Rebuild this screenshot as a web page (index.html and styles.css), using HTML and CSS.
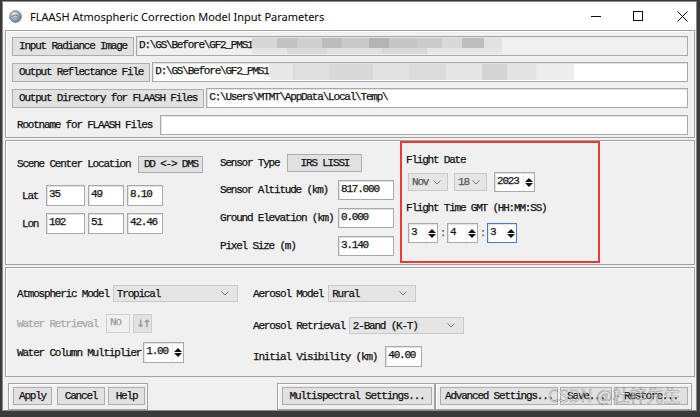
FILE: index.html
```html
<!DOCTYPE html>
<html>
<head>
<meta charset="utf-8">
<link rel="stylesheet" href="styles.css">
</head>
<body>
<div class="window">
  <div class="titlebar">
    <svg class="app-icon" width="13" height="13" viewBox="0 0 13 13">
      <defs>
        <radialGradient id="g" cx="40%" cy="35%" r="70%">
          <stop offset="0" stop-color="#eef2f6"/>
          <stop offset="0.6" stop-color="#9aa8b6"/>
          <stop offset="1" stop-color="#5d6b7a"/>
        </radialGradient>
      </defs>
      <circle cx="6.5" cy="6.5" r="5.8" fill="url(#g)" stroke="#5a6570" stroke-width="0.8"/>
      <path d="M2.5 6.5 Q6.5 3.5 10.5 6.5" fill="none" stroke="#4a6a8a" stroke-width="0.9"/>
      <path d="M3 8.5 Q6.5 6 10 8.5" fill="none" stroke="#6a8aa8" stroke-width="0.7"/>
    </svg>
    <span class="title">FLAASH Atmospheric Correction Model Input Parameters</span>
    <div class="controls">
      <svg class="ctl ctl-min" width="11" height="11" viewBox="0 0 11 11"><path d="M0 5.5 H10" stroke="#111" stroke-width="1"/></svg>
      <svg class="ctl ctl-max" width="11" height="11" viewBox="0 0 11 11"><rect x="0.5" y="0.5" width="9" height="9" fill="none" stroke="#111" stroke-width="1"/></svg>
      <svg class="ctl ctl-close" width="11" height="11" viewBox="0 0 11 11"><path d="M0.5 0.5 L10.5 10.5 M10.5 0.5 L0.5 10.5" stroke="#111" stroke-width="1"/></svg>
    </div>
  </div>

  <div class="client">
    <section class="panel files">
      <div class="file-row">
        <button class="btn">Input Radiance Image</button>
        <div class="field field-ro"><span>D:\GS\Before\GF2_PMS1</span><span class="mosaic mosaic-a"></span></div>
      </div>
      <div class="file-row">
        <button class="btn">Output Reflectance File</button>
        <div class="field"><span>D:\GS\Before\GF2_PMS1</span><span class="mosaic mosaic-b"></span></div>
      </div>
      <div class="file-row">
        <button class="btn">Output Directory for FLAASH Files</button>
        <div class="field"><span>C:\Users\MTMT\AppData\Local\Temp\</span></div>
      </div>
      <div class="file-row">
        <span class="root-label">Rootname for FLAASH Files</span>
        <div class="field"></div>
      </div>
    </section>

    <section class="panel scene">
      <div class="col-loc">
        <div class="line">
          <span>Scene Center Location</span>
          <button class="btn btn-dd">DD &lt;-&gt; DMS</button>
        </div>
        <div class="coords">
          <span class="coord-label">Lat</span>
          <div class="field num">35</div>
          <div class="field num">49</div>
          <div class="field num">8.10</div>
          <span class="coord-label">Lon</span>
          <div class="field num">102</div>
          <div class="field num">51</div>
          <div class="field num">42.46</div>
        </div>
      </div>

      <div class="col-sensor">
        <div class="line">
          <span>Sensor Type</span>
          <button class="btn btn-sensor">IRS LISSI</button>
        </div>
        <div class="sensor-grid">
          <span>Sensor Altitude (km)</span>
          <div class="field num">817.000</div>
          <span>Ground Elevation (km)</span>
          <div class="field num">0.000</div>
          <span>Pixel Size (m)</span>
          <div class="field num">3.140</div>
        </div>
      </div>

      <div class="col-flight">
        <div class="flight-label">Flight Date</div>
        <div class="date-row">
          <div class="combo combo-month"><span>Nov</span><svg class="chev" width="8" height="5" viewBox="0 0 8 5"><path d="M0.5 0.5 L4 4 L7.5 0.5" fill="none" stroke="#777" stroke-width="1"/></svg></div>
          <div class="combo combo-day"><span>18</span><svg class="chev" width="8" height="5" viewBox="0 0 8 5"><path d="M0.5 0.5 L4 4 L7.5 0.5" fill="none" stroke="#777" stroke-width="1"/></svg></div>
          <div class="spin spin-year"><span class="val">2023</span><span class="arrows"><i class="up"></i><i class="dn"></i></span></div>
        </div>
        <div class="flight-label time-label">Flight Time GMT (HH:MM:SS)</div>
        <div class="time-row">
          <div class="spin spin-t"><span class="val">3</span><span class="arrows"><i class="up"></i><i class="dn"></i></span></div>
          <span class="colon">:</span>
          <div class="spin spin-t spin-m"><span class="val">4</span><span class="arrows"><i class="up"></i><i class="dn"></i></span></div>
          <span class="colon">:</span>
          <div class="spin spin-t focus"><span class="val">3</span><span class="arrows"><i class="up"></i><i class="dn"></i></span></div>
        </div>
      </div>
    </section>

    <section class="panel atmos">
      <div class="col-atm">
        <div class="line row-a">
          <span>Atmospheric Model</span>
          <div class="combo combo-atm"><span>Tropical</span><svg class="chev" width="8" height="5" viewBox="0 0 8 5"><path d="M0.5 0.5 L4 4 L7.5 0.5" fill="none" stroke="#777" stroke-width="1"/></svg></div>
        </div>
        <div class="line row-b disabled">
          <span>Water Retrieval</span>
          <div class="no-box">No</div>
          <button class="btn btn-swap">&#8595;&#8593;</button>
        </div>
        <div class="line row-c">
          <span>Water Column Multiplier</span>
          <div class="spin spin-wcm"><span class="val">1.00</span><span class="arrows"><i class="up"></i><i class="dn"></i></span></div>
        </div>
      </div>
      <div class="col-aer">
        <div class="line row-a">
          <span>Aerosol Model</span>
          <div class="combo combo-aer"><span>Rural</span><svg class="chev" width="8" height="5" viewBox="0 0 8 5"><path d="M0.5 0.5 L4 4 L7.5 0.5" fill="none" stroke="#777" stroke-width="1"/></svg></div>
        </div>
        <div class="line row-d">
          <span>Aerosol Retrieval</span>
          <div class="combo combo-ret"><span>2-Band (K-T)</span><svg class="chev" width="8" height="5" viewBox="0 0 8 5"><path d="M0.5 0.5 L4 4 L7.5 0.5" fill="none" stroke="#777" stroke-width="1"/></svg></div>
        </div>
        <div class="line row-e">
          <span>Initial Visibility (km)</span>
          <div class="field num vis">40.00</div>
        </div>
      </div>
    </section>

    <div class="actions">
      <div class="group g-main">
        <button class="btn b-apply">Apply</button>
        <button class="btn b-cancel">Cancel</button>
        <button class="btn b-help">Help</button>
      </div>
      <div class="group g-multi">
        <button class="btn b-multi">Multispectral Settings...</button>
      </div>
      <div class="group g-adv">
        <button class="btn b-adv">Advanced Settings...</button>
        <button class="btn b-save">Save...</button>
        <button class="btn b-restore">Restore...</button>
      </div>
    </div>
  </div>

  <div class="watermark">CSDN @杜梓先生</div>
</div>
</body>
</html>
```

FILE: styles.css
```css
* { box-sizing: border-box; }

html, body {
  margin: 0;
  padding: 0;
}

body {
  width: 700px;
  height: 417px;
  overflow: hidden;
  background: #3a3a3a;
  font-family: "Liberation Mono", "DejaVu Sans Mono", monospace;
  font-size: 11px;
  letter-spacing: -1.2px;
  color: #111;
  -webkit-text-stroke: 0.25px currentColor;
}

.window {
  position: relative;
  margin: 1px 0 0 2px;
  width: 695px;
  height: 410px;
  background: #f0f0f0;
  border: 1px solid #8a8a8a;
  display: flex;
  flex-direction: column;
}

/* ---------- title bar ---------- */
.titlebar {
  height: 28px;
  flex: none;
  background: #ffffff;
  display: flex;
  align-items: center;
  padding-left: 6px;
  font-family: "Noto Sans", "Open Sans", sans-serif;
  font-size: 11px;
  letter-spacing: 0;
  color: #000;
  -webkit-text-stroke: 0;
}

.app-icon { flex: none; }

.title { margin-left: 8px; }

.controls {
  margin-left: auto;
  display: flex;
  align-items: center;
  padding-right: 8px;
}

.ctl { display: block; }
.ctl-max { margin-left: 31px; }
.ctl-close { margin-left: 33px; }

/* ---------- client ---------- */
.client {
  flex: 1;
  display: flex;
  flex-direction: column;
  padding: 0 1px 0 2px;
}

.panel {
  border: 1px solid #a2a2a2;
  box-shadow: inset 1px 1px 0 #ffffff;
}

.btn {
  font: inherit;
  letter-spacing: inherit;
  color: #111;
  background: #e1e1e1;
  border: 1px solid #adadad;
  padding: 0 6px;
  margin: 0;
  height: 19px;
  white-space: nowrap;
  display: flex;
  align-items: center;
  justify-content: center;
}

.field {
  background: #ffffff;
  border: 1px solid #a9a9a9;
  box-shadow: inset 1px 1px 0 #e2e2e2;
  display: flex;
  align-items: flex-start;
  padding: 2px 0 0 2px;
  white-space: nowrap;
  overflow: hidden;
  line-height: 13px;
}

.field-ro { background: #f0f0f0; }

/* ---------- files panel ---------- */
.files {
  height: 108px;
  padding: 5px 6px 0 6px;
  display: flex;
  flex-direction: column;
  gap: 6px;
}

.file-row {
  display: flex;
  align-items: center;
  gap: 2px;
  height: 20px;
}

.file-row .field {
  flex: 1;
  height: 20px;
}

.file-row:nth-child(4) { margin-top: 1px; }

.root-label {
  width: 146px;
  padding-left: 5px;
  flex: none;
}

.mosaic {
  display: block;
  height: 16px;
  margin-top: -1px;
  flex: none;
}

.mosaic-a {
  width: 250px;
  background:
    linear-gradient(90deg, #d6d6d6 0 10%, #c2c2c2 10% 18%, #cfcfcf 18% 28%, #bcbcbc 28% 36%, #c9c9c9 36% 47%, #b4b4b4 47% 55%, #c6c6c6 55% 66%, #cbcbcb 66% 76%, #d9d9d9 76% 84%, #bebebe 84% 93%, #e2e2e2 93% 100%) top / 100% 10px no-repeat,
    linear-gradient(90deg, #e4e4e4 0 14%, #dadada 14% 30%, #e0e0e0 30% 52%, #d8d8d8 52% 70%, #e6e6e6 70% 100%) bottom / 100% 6px no-repeat;
}

.mosaic-b {
  width: 305px;
  background:
    linear-gradient(90deg, #e8e8e8 0 8%, #dedede 8% 20%, #d9d9d9 20% 34%, #e2e2e2 34% 46%, #dcdcdc 46% 58%, #e6e6e6 58% 70%, #d4d4d4 70% 78%, #e3e3e3 78% 88%, #ededed 88% 100%);
}

/* ---------- scene panel ---------- */
.scene {
  margin-top: 2px;
  height: 125px;
  display: flex;
  align-items: flex-start;
}

.line {
  display: flex;
  align-items: center;
  white-space: nowrap;
}

.col-loc {
  width: 214px;
  flex: none;
  padding: 14px 0 0 11px;
}

.col-loc .line { height: 18px; }

.btn-dd {
  margin-left: 8px;
  width: 65px;
  height: 17px;
  padding: 0;
}

.coords {
  margin-top: 12px;
  display: grid;
  grid-template-columns: 29px 36px 36px 36px;
  grid-auto-rows: 21px;
  column-gap: 3px;
  row-gap: 7px;
  align-items: center;
}

.coords .coord-label { padding-left: 5px; }
.coords .field { height: 21px; }
.coords .coord-label + .field { margin-left: -3px; }

.col-sensor {
  width: 180px;
  flex: none;
  padding-top: 13px;
}

.col-sensor .line { height: 18px; }

.btn-sensor {
  margin-left: 8px;
  width: 75px;
  height: 18px;
}

.sensor-grid {
  margin-top: 8px;
  display: grid;
  grid-template-columns: 118px 56px;
  grid-auto-rows: 20px;
  row-gap: 8px;
  align-items: center;
}

.sensor-grid .field { height: 20px; }

.col-flight {
  width: 200px;
  height: 122px;
  flex: none;
  border: 2px solid #ee3a32;
  padding: 11px 0 0 4px;
}

.flight-label {
  line-height: 12px;
  height: 12px;
}

.date-row {
  margin-top: 6px;
  display: flex;
  align-items: center;
  height: 20px;
  padding-left: 2px;
}

.combo {
  height: 18px;
  background: #e5e5e5;
  border: 1px solid #c9c9c9;
  display: flex;
  align-items: center;
  justify-content: space-between;
  padding: 0 6px 0 3px;
  white-space: nowrap;
}

.combo .chev { flex: none; }

.combo-month { width: 40px; color: #555; }
.combo-day { width: 33px; margin-left: 6px; color: #555; }

.spin {
  height: 20px;
  background: #ffffff;
  border: 1px solid #a9a9a9;
  box-shadow: inset 1px 1px 0 #e2e2e2;
  display: flex;
}

.spin .val {
  flex: 1;
  padding: 2px 0 0 2px;
  line-height: 13px;
  overflow: hidden;
}

.spin .arrows {
  width: 11px;
  flex: none;
  display: flex;
  flex-direction: column;
  align-items: center;
  justify-content: center;
  gap: 1px;
  border-left: 1px solid #ececec;
}

.spin .up {
  width: 0;
  height: 0;
  border-left: 4px solid transparent;
  border-right: 4px solid transparent;
  border-bottom: 4px solid #111;
}

.spin .dn {
  width: 0;
  height: 0;
  border-left: 4px solid transparent;
  border-right: 4px solid transparent;
  border-top: 4px solid #111;
}

.spin-year { width: 41px; margin-left: 7px; }

.time-label { margin-top: 10px; }

.time-row {
  margin-top: 9px;
  display: flex;
  align-items: center;
  padding-left: 2px;
}

.spin-t { width: 30px; }
.spin-m { width: 31px; }
.spin.focus { border-color: #3c7fd1; }

.colon {
  width: 9px;
  text-align: center;
  color: #666;
}

/* ---------- atmosphere panel ---------- */
.atmos {
  margin-top: 2px;
  height: 110px;
  display: flex;
  align-items: flex-start;
}

.col-atm {
  width: 247px;
  flex: none;
  padding: 17px 0 0 11px;
}

.col-aer {
  flex: 1;
  padding-top: 17px;
}

.row-a { height: 17px; }
.row-b { height: 19px; margin-top: 12px; }
.row-c { height: 21px; margin-top: 9px; }
.row-d { height: 17px; margin-top: 15px; }
.row-e { height: 21px; margin-top: 12px; }

.combo-atm {
  width: 125px;
  height: 17px;
  margin-left: 4px;
  color: #111;
  padding-right: 8px;
}

.combo-aer {
  width: 88px;
  height: 17px;
  margin-left: 5px;
  color: #111;
  padding-right: 8px;
}

.combo-ret {
  width: 115px;
  height: 17px;
  margin-left: 4px;
  color: #111;
  padding-right: 8px;
}

.disabled { color: #a8a8a8; }

.no-box {
  width: 24px;
  height: 19px;
  margin-left: 8px;
  border: 1px solid #cfcfcf;
  background: #f0f0f0;
  padding: 1px 0 0 3px;
  color: #9a9a9a;
}

.btn-swap {
  width: 19px;
  height: 19px;
  margin-left: 3px;
  padding: 0;
  color: #9a9a9a;
  font-weight: bold;
  font-family: "DejaVu Sans", sans-serif;
  font-size: 10px;
  letter-spacing: -2px;
  border-color: #cfcfcf;
}

.spin-wcm { width: 41px; height: 21px; margin-left: 2px; }

.vis { width: 37px; height: 21px; margin-left: 8px; }

/* ---------- actions ---------- */
.actions {
  margin-top: 3px;
  height: 30px;
  display: flex;
  align-items: flex-start;
}

.group {
  margin-top: 3px;
  height: 27px;
  border: 1px solid #a2a2a2;
  box-shadow: inset 1px 1px 0 #ffffff;
  display: flex;
  align-items: flex-start;
  padding: 3px 0 0 4px;
}

.group .btn { height: 18px; padding: 0; }

.g-main { margin-left: 3px; width: 140px; }
.b-apply { width: 39px; }
.b-cancel { width: 48px; margin-left: 5px; }
.b-help { width: 37px; margin-left: 3px; }

.g-multi { margin-left: 129px; width: 158px; }
.b-multi { width: 150px; }

.g-adv { width: 257px; padding-left: 4px; }
.b-adv { width: 118px; }
.b-save { width: 52px; margin-left: 2px; }
.b-restore { width: 74px; margin-left: 2px; }

/* ---------- watermark overlay ---------- */
.watermark {
  position: absolute;
  left: 545px;
  top: 382px;
  font-family: "Noto Sans CJK SC", "Noto Sans", sans-serif;
  font-size: 17px;
  letter-spacing: 0;
  line-height: 22px;
  color: rgba(255, 255, 255, 0.55);
  -webkit-text-stroke: 0.6px rgba(80, 80, 80, 0.55);
  white-space: nowrap;
  pointer-events: none;
}
```
